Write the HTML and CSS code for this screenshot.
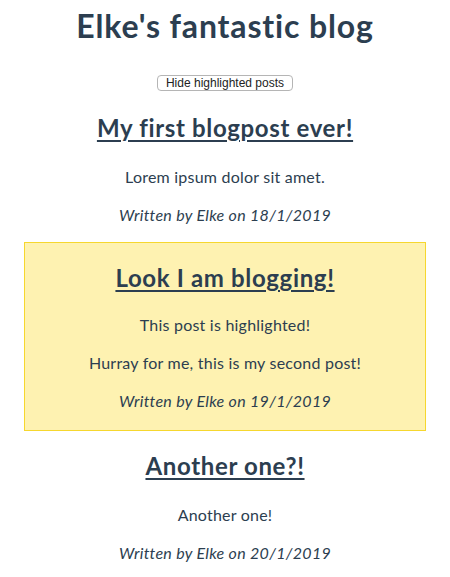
FILE: index.html
```html
<!DOCTYPE html>
<html lang="en">
<head>
<meta charset="utf-8">
<title>Elke's fantastic blog</title>
<link rel="stylesheet" href="styles.css">
</head>
<body>
<div class="app">
  <h1 class="blog-title">Elke's fantastic blog</h1>
  <div class="toolbar">
    <button class="toggle-btn" type="button">Hide highlighted posts</button>
  </div>
  <article class="post">
    <h2 class="post-title"><a href="#">My first blogpost ever!</a></h2>
    <p class="post-text">Lorem ipsum dolor sit amet.</p>
    <p class="post-meta">Written by Elke on 18/1/2019</p>
  </article>
  <article class="post post--highlighted">
    <h2 class="post-title"><a href="#">Look I am blogging!</a></h2>
    <p class="post-text">This post is highlighted!</p>
    <p class="post-text">Hurray for me, this is my second post!</p>
    <p class="post-meta">Written by Elke on 19/1/2019</p>
  </article>
  <article class="post">
    <h2 class="post-title"><a href="#">Another one?!</a></h2>
    <p class="post-text">Another one!</p>
    <p class="post-meta">Written by Elke on 20/1/2019</p>
  </article>
</div>
</body>
</html>
```

FILE: styles.css
```css
html, body {
  margin: 0;
  padding: 0;
  background: #ffffff;
}

.app {
  padding: 0 8px;
  font-family: "Lato", "Noto Sans", sans-serif;
  color: #2c3e50;
  text-align: center;
}

.blog-title {
  margin: 6px 0 0;
  font-size: 32px;
  line-height: 40px;
  font-weight: 700;
  letter-spacing: 0.85px;
}

.toolbar {
  margin-top: 29px;
  display: flex;
  justify-content: center;
}

.toggle-btn {
  font-family: "Liberation Sans", Arial, sans-serif;
  font-size: 12px;
  line-height: 14px;
  color: #222222;
  background: #ffffff;
  border: 1px solid #b5b5b5;
  border-radius: 4px;
  padding: 0 8px;
  height: 16px;
}

.post {
  display: flex;
  flex-direction: column;
}

.post-title {
  margin: 21px 0 22px;
  font-size: 24px;
  line-height: 32px;
  font-weight: 700;
  letter-spacing: 0.65px;
}

.post-title a {
  color: #2c3e50;
  text-decoration: underline;
  text-decoration-thickness: 2px;
  text-underline-offset: 3px;
}

.post-text,
.post-meta {
  margin: 0 0 16px;
  font-size: 16px;
  line-height: 22px;
  letter-spacing: 0.22px;
}

.post-meta {
  font-style: italic;
  letter-spacing: 0.3px;
  margin-bottom: 0;
}

.post--highlighted {
  margin: 16px 16px 0;
  background: #fef2b1;
  border: 1px solid #f6d72e;
  padding: 0 0 18px;
}

.post--highlighted .post-title {
  margin-top: 19px;
  margin-bottom: 20px;
}

.post--highlighted + .post .post-title {
  margin-top: 19px;
}
```
